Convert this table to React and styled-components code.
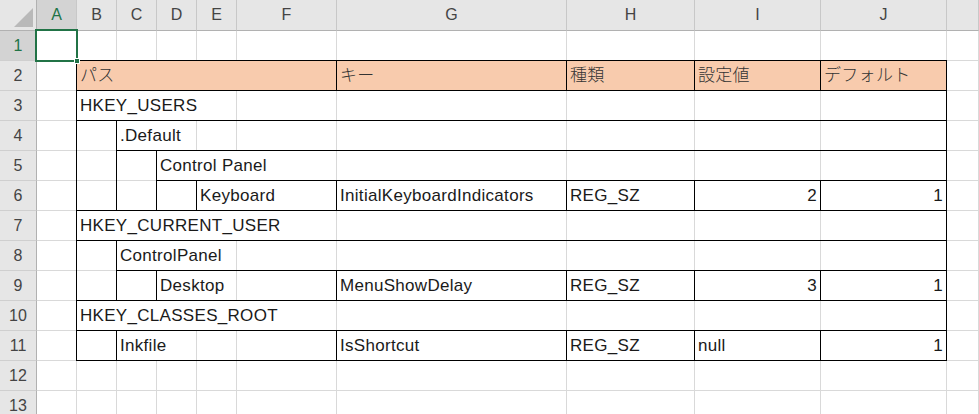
import React from 'react';
import styled, { createGlobalStyle } from 'styled-components';

const LETTERS = ['A', 'B', 'C', 'D', 'E', 'F', 'G', 'H', 'I', 'J', 'K'];
const ROW_COUNT = 13;

// column letter -> grid line (row header takes line 1)
const c = (l) => LETTERS.indexOf(l) + 2;
const span = (from, to = from) => `${c(from)} / ${c(to) + 1}`;
const rows = (from, to = from) => `${from + 1} / ${to + 2}`;

const BOXES = [
  { col: span('B', 'F'), row: rows(2), text: 'パス', fill: true },
  { col: span('G'), row: rows(2), text: 'キー', fill: true },
  { col: span('H'), row: rows(2), text: '種類', fill: true },
  { col: span('I'), row: rows(2), text: '設定値', fill: true },
  { col: span('J'), row: rows(2), text: 'デフォルト', fill: true },

  { col: span('B', 'J'), row: rows(3), text: 'HKEY_USERS' },
  { col: span('B'), row: rows(4, 6) },
  { col: span('C', 'J'), row: rows(4), text: '.Default' },
  { col: span('C'), row: rows(5, 6) },
  { col: span('D', 'J'), row: rows(5), text: 'Control Panel' },
  { col: span('D'), row: rows(6) },
  { col: span('E', 'F'), row: rows(6), text: 'Keyboard' },
  { col: span('G'), row: rows(6), text: 'InitialKeyboardIndicators' },
  { col: span('H'), row: rows(6), text: 'REG_SZ' },
  { col: span('I'), row: rows(6), text: '2', right: true },
  { col: span('J'), row: rows(6), text: '1', right: true },

  { col: span('B', 'J'), row: rows(7), text: 'HKEY_CURRENT_USER' },
  { col: span('B'), row: rows(8, 9) },
  { col: span('C', 'J'), row: rows(8), text: 'ControlPanel' },
  { col: span('C'), row: rows(9) },
  { col: span('D', 'F'), row: rows(9), text: 'Desktop' },
  { col: span('G'), row: rows(9), text: 'MenuShowDelay' },
  { col: span('H'), row: rows(9), text: 'REG_SZ' },
  { col: span('I'), row: rows(9), text: '3', right: true },
  { col: span('J'), row: rows(9), text: '1', right: true },

  { col: span('B', 'J'), row: rows(10), text: 'HKEY_CLASSES_ROOT' },
  { col: span('B'), row: rows(11) },
  { col: span('C', 'F'), row: rows(11), text: 'Inkfile' },
  { col: span('G'), row: rows(11), text: 'IsShortcut' },
  { col: span('H'), row: rows(11), text: 'REG_SZ' },
  { col: span('I'), row: rows(11), text: 'null' },
  { col: span('J'), row: rows(11), text: '1', right: true },
];

const App = () => {
  const cells = [];
  for (let r = 1; r <= ROW_COUNT; r++) {
    cells.push(
      <RowHead key={`rh${r}`} $row={r + 1} $active={r === 1}>
        {r}
      </RowHead>
    );
    LETTERS.forEach((l) => {
      cells.push(<Cell key={`${l}${r}`} $col={c(l)} $row={r + 1} />);
    });
  }

  return (
    <>
      <GlobalStyle />
      <Sheet>
        <Corner>
          <Triangle />
        </Corner>
        {LETTERS.map((l) => (
          <ColHead key={l} $col={c(l)} $active={l === 'A'}>
            {l === 'K' ? '' : l}
          </ColHead>
        ))}
        {cells}
        {BOXES.map((b, i) => (
          <Box key={i} $col={b.col} $row={b.row} $fill={b.fill} $right={b.right}>
            {b.text && <Label $fill={b.fill}>{b.text}</Label>}
          </Box>
        ))}
        <Selection />
      </Sheet>
    </>
  );
};

export default App;

const GlobalStyle = createGlobalStyle`
  html, body {
    margin: 0;
    padding: 0;
    background: #fff;
    overflow: hidden;
  }
`;

const Sheet = styled.div`
  display: grid;
  grid-template-columns: 37px repeat(5, 40px) 100px 230px 128px 126px 126px 1fr;
  grid-template-rows: 31px repeat(13, 30px);
  width: 979px;
  height: 414px;
  overflow: hidden;
  font-family: 'Liberation Sans', 'Noto Sans CJK JP', sans-serif;
`;

const Corner = styled.div`
  grid-column: 1;
  grid-row: 1;
  display: flex;
  justify-content: flex-end;
  align-items: flex-end;
  padding: 0 3px 3px 0;
  background: #e6e6e6;
  border-right: 1px solid #b1b1b1;
  border-bottom: 1px solid #b1b1b1;
`;

const Triangle = styled.div`
  width: 19px;
  height: 19px;
  background: #b9b9b9;
  clip-path: polygon(100% 0, 100% 100%, 0 100%);
`;

const ColHead = styled.div`
  grid-column: ${(p) => p.$col};
  grid-row: 1;
  background: ${(p) => (p.$active ? '#d3d3d3' : '#e6e6e6')};
  color: ${(p) => (p.$active ? '#217346' : '#444')};
  border-right: 1px solid #c8c8c8;
  border-bottom: 1px solid #b1b1b1;
  font-size: 16px;
  line-height: 30px;
  text-align: center;
`;

const RowHead = styled.div`
  grid-column: 1;
  grid-row: ${(p) => p.$row};
  background: ${(p) => (p.$active ? '#d3d3d3' : '#e6e6e6')};
  color: ${(p) => (p.$active ? '#217346' : '#444')};
  border-right: 1px solid #b1b1b1;
  border-bottom: 1px solid #cfcfcf;
  font-size: 16px;
  line-height: 30px;
  text-align: center;
  overflow: hidden;
`;

const Cell = styled.div`
  grid-column: ${(p) => p.$col};
  grid-row: ${(p) => p.$row};
  border-right: 1px solid #d9d9d9;
  border-bottom: 1px solid #d9d9d9;
`;

const Box = styled.div`
  grid-column: ${(p) => p.$col};
  grid-row: ${(p) => p.$row};
  margin: -1px 0 0 -1px;
  border: 1px solid #000;
  background: ${(p) => (p.$fill ? '#f8cbad' : 'transparent')};
  padding: 0 3px;
  color: #1a1a1a;
  font-size: 17px;
  line-height: 29px;
  letter-spacing: 0.3px;
  white-space: nowrap;
  text-align: ${(p) => (p.$right ? 'right' : 'left')};
`;

const Label = styled.span`
  display: inline-block;
  background: ${(p) => (p.$fill ? 'transparent' : '#fff')};
  font-weight: ${(p) => (p.$fill ? 300 : 400)};
  color: ${(p) => (p.$fill ? '#333' : 'inherit')};
`;

const Selection = styled.div`
  grid-column: 2;
  grid-row: 2;
  margin: -2px -1px -1px -2px;
  border: 2px solid #217346;
  position: relative;

  &::after {
    content: '';
    position: absolute;
    right: -4px;
    bottom: -4px;
    width: 4px;
    height: 4px;
    background: #217346;
    border: 1px solid #fff;
  }
`;
